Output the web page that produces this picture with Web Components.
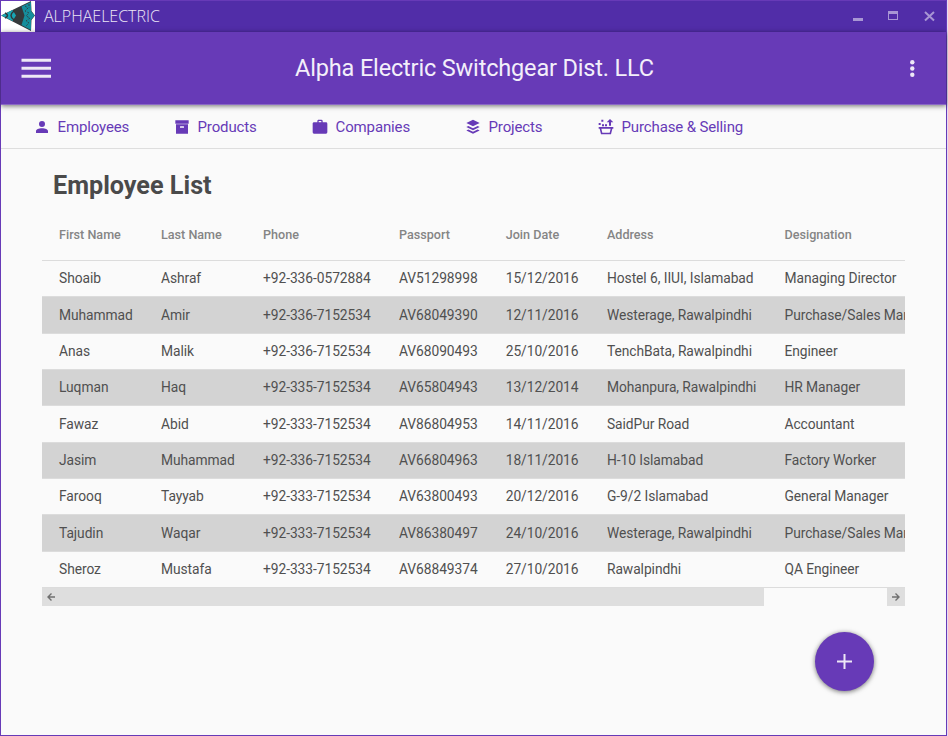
<!DOCTYPE html>
<html lang="en"><head><meta charset="utf-8"><title>ALPHAELECTRIC</title>
<style>html,body{margin:0;height:100%}body{font-family:Roboto,sans-serif;overflow:hidden}</style></head>
<body><app-window></app-window>
<script>
class Base extends HTMLElement{constructor(){super();this.attachShadow({mode:'open'}).innerHTML=this.html()}}
customElements.define('window-bar',class extends Base{html(){return `<style>
:host{display:flex;align-items:center;height:31px;background:#512da8;color:#ece7f6;font:300 16px "Open Sans",sans-serif}
.logo{width:34px;height:31px;background:#fff;margin-right:9px}.t{flex:1;font-size:16px;letter-spacing:0;position:relative;top:-1px}
.c{width:114px;height:31px}</style>
<svg class="logo" viewBox="1 1 34 31"><path d="M1 15.500 31 1 31.500 11 35 15.500 31.500 20 31 31Z" fill="#35393b"/><path d="M1.500 15.500 12.500 10 16 15.500 12.500 21Z" fill="#18a5b5"/><path d="M21.500 6.500 31 2 31 11 34.500 15.500 31 20 31 30 21.500 25 24.500 15.500Z" fill="#158e9c"/><path d="M5 13Q10 15.500 5 18M14 11Q8 15.500 14 20" fill="none" stroke="#30383a" stroke-width="1.500"/><path d="m25 6 3 2-3 3 4 2-3 3 4 2-4 3 3 2-3 3M29 4v4" fill="none" stroke="#30474b" stroke-width="1" stroke-dasharray="2 1.500"/></svg>
<div class="t"><slot></slot></div>
<svg class="c" viewBox="832 1 114 31"><g fill="#a896d4"><path d="M853 18h10v3h-10z"/><path fill-rule="evenodd" d="M888 11h10v9h-10zM889 14v5h8v-5z"/></g><path d="m925 12 9 8.500M934 12l-9 8.500" stroke="#a896d4" stroke-width="2"/></svg>`}});
customElements.define('app-header',class extends Base{html(){return `<style>
:host{display:flex;align-items:center;justify-content:space-between;height:72px;border-bottom:1px solid #8a68c4;background:#673ab7;color:#f3effa;font-size:23.500px;letter-spacing:-.16px;box-shadow:0 1px 5px rgba(0,0,0,.55);position:relative;z-index:1}
.m{width:50px;height:72px}.d{width:48px;height:72px}</style>
<svg class="m" viewBox="1 32 50 72"><path d="M21.500 58.700h29.500v3H21.500zM21.500 66.700h29.500v3H21.500zM21.500 74.700h29.500v3H21.500z" fill="#ede7f6"/></svg><div><slot></slot></div>
<svg class="d" viewBox="898 32 48 72" fill="#ede7f6"><circle cx="912.300" cy="62.200" r="2.200"/><circle cx="912.300" cy="68.500" r="2.200"/><circle cx="912.300" cy="74.700" r="2.200"/></svg>`}});
customElements.define('nav-item',class extends Base{html(){const p={
employees:'<path d="M12 3a4.500 4.500 0 1 1 0 9 4.500 4.500 0 0 1 0-9m0 11c5 0 9 1.790 9 4v3H3v-3c0-2.210 4-4 9-4"/>',
products:'<path d="M2 2h20v5H2zm1 6h18v14H3zm6.500 3a.5.5 0 0 0-.5.500V13h6v-1.500a.5.500 0 0 0-.5-.5z"/>',
companies:'<path d="M10 1h4a2 2 0 0 1 2 2v2h5a2 2 0 0 1 2 2v13a2 2 0 0 1-2 2H3a2 2 0 0 1-2-2V7c0-1.110.890-2 2-2h5V3c0-1.110.890-2 2-2m4 4V3h-4v2z"/>',
projects:'<path d="m12 0 10 5-10 5L2 5zM5 9.500l7 3.500 7-3.500 3 1.500-10 5-10-5zm0 5.300 7 3.500 7-3.500 3 1.500-10 5-10-5z" transform="translate(0 1)"/>',
selling:'<path fill-rule="evenodd" d="M1 12h22v2.500h-1.500L19.500 23h-15l-2-8.500H1zm4 2.500 1.500 6h11l1.500-6zM18 0l5 5h-3.500v5h-3V5H13zM1 6h3v3H1zM5 1h3v3H5zM6 8h3v3H6zM10.500 8h3v3h-3z"/>'};
return `<style>:host{display:flex;align-items:center;color:#673ab7;font-size:15px;letter-spacing:-.130px;white-space:nowrap}svg{width:16px;height:16px;margin-right:7.500px}</style>
<svg viewBox="0 0 24 24" fill="#673ab7">${p[this.getAttribute('icon')]}</svg><slot></slot>`}});
customElements.define('nav-tabs',class extends Base{html(){return `<style>:host{display:flex;height:43px;padding-left:33px;border-bottom:1px solid #dedede}</style><slot></slot>`}});
const rows=`Shoaib|Ashraf|+92-336-0572884|AV51298998|15/12/2016|Hostel 6, IIUI, Islamabad|Managing Director
Muhammad|Amir|+92-336-7152534|AV68049390|12/11/2016|Westerage, Rawalpindhi|Purchase/Sales Manager
Anas|Malik|+92-336-7152534|AV68090493|25/10/2016|TenchBata, Rawalpindhi|Engineer
Luqman|Haq|+92-335-7152534|AV65804943|13/12/2014|Mohanpura, Rawalpindhi|HR Manager
Fawaz|Abid|+92-333-7152534|AV86804953|14/11/2016|SaidPur Road|Accountant
Jasim|Muhammad|+92-336-7152534|AV66804963|18/11/2016|H-10 Islamabad|Factory Worker
Farooq|Tayyab|+92-333-7152534|AV63800493|20/12/2016|G-9/2 Islamabad|General Manager
Tajudin|Waqar|+92-333-7152534|AV86380497|24/10/2016|Westerage, Rawalpindhi|Purchase/Sales Manager
Sheroz|Mustafa|+92-333-7152534|AV68849374|27/10/2016|Rawalpindhi|QA Engineer`.split('\n').map(r=>r.split('|'));
const cells=a=>a.map(t=>`<span>${t}</span>`).join('');
customElements.define('employee-table',class extends Base{html(){return `<style>
:host{display:block;width:863px;overflow:hidden;color:#505050;font-size:13.800px;letter-spacing:-.060px}
.r{display:grid;grid-template-columns:102px 102px 136px 106.700px 101.300px 177.500px 200px;padding:0 0 .8px 17px;height:36.330px;box-sizing:border-box;border-bottom:1px solid #dcdcdc;align-items:center;white-space:nowrap;width:943px}
.h{height:53px;padding-bottom:0;color:#858585;font-weight:500;font-size:12.600px;letter-spacing:0}.alt{background:#d3d3d3}</style>
<div class="r h">${cells(['First Name','Last Name','Phone','Passport','Join Date','Address','Designation'])}</div>${rows.map((r,i)=>`<div class="r${i%2?' alt':''}">${cells(r)}</div>`).join('')}`}});
customElements.define('scroll-bar',class extends Base{html(){return `<style>:host{display:flex;width:863px;height:18px;justify-content:space-between}div{background:#dedede;height:18px;width:722px}.e{width:18px}svg{display:block;width:18px;height:18px;fill:none;stroke:#707070;stroke-width:1.400}</style>
<div><svg viewBox="0 0 18 18"><path d="M13 9H6M9.500 5.500 6 9l3.500 3.500"/></svg></div><div class="e"><svg viewBox="0 0 18 18"><path d="M5 9h7M8.500 5.500 12 9l-3.500 3.500"/></svg></div>`}});
customElements.define('add-button',class extends Base{html(){return `<style>:host{display:block;width:59px;height:59px;border-radius:50%;background:#673ab7;box-shadow:0 1px 5px rgba(0,0,0,.55)}svg{display:block}</style><svg width="59" height="59"><path d="M29.500 22v15M22 29.500h15" stroke="#ede7f6" stroke-width="2"/></svg>`}});
customElements.define('app-window',class extends Base{html(){return `<style>
:host{display:block;box-sizing:border-box;width:947px;height:736px;background:#fafafa;border:1px solid #673ab7;box-shadow:1px 0 #e4dcf2}
main{padding:20px 0 0 41px}h1{font-size:25.200px;font-weight:700;line-height:34px;margin:0 0 5px 11px;color:#4a4a4a}
add-button{margin:25.700px 0 0 772.500px}</style>
<window-bar>ALPHAELECTRIC</window-bar><app-header>Alpha Electric Switchgear Dist. LLC</app-header>
<nav-tabs><nav-item icon="employees" style="width:140px">Employees</nav-item><nav-item icon="products" style="width:138px">Products</nav-item><nav-item icon="companies" style="width:153px">Companies</nav-item><nav-item icon="projects" style="width:133px">Projects</nav-item><nav-item icon="selling">Purchase &amp; Selling</nav-item></nav-tabs>
<main><h1>Employee List</h1><employee-table></employee-table><scroll-bar></scroll-bar><add-button></add-button></main>`}});
</script></body></html>
